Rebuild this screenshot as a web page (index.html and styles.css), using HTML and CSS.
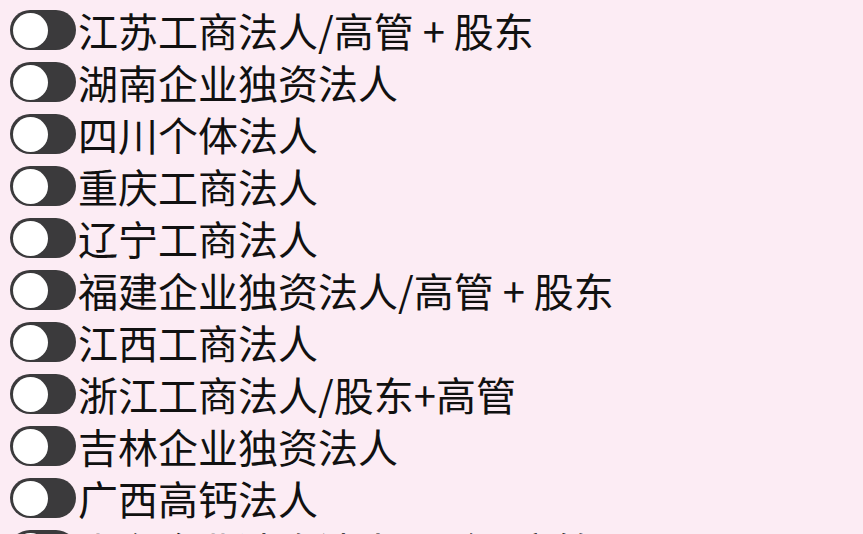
FILE: index.html
```html
<!DOCTYPE html>
<html lang="zh-CN">
<head>
<meta charset="utf-8">
<title>列表</title>
<link rel="stylesheet" href="styles.css">
</head>
<body>
<ul class="list">
  <li class="row"><span class="toggle"><span class="knob"></span></span><span class="label">江苏工商法人/高管 + 股东</span></li>
  <li class="row"><span class="toggle"><span class="knob"></span></span><span class="label">湖南企业独资法人</span></li>
  <li class="row"><span class="toggle"><span class="knob"></span></span><span class="label">四川个体法人</span></li>
  <li class="row"><span class="toggle"><span class="knob"></span></span><span class="label">重庆工商法人</span></li>
  <li class="row"><span class="toggle"><span class="knob"></span></span><span class="label">辽宁工商法人</span></li>
  <li class="row"><span class="toggle"><span class="knob"></span></span><span class="label">福建企业独资法人/高管 + 股东</span></li>
  <li class="row"><span class="toggle"><span class="knob"></span></span><span class="label">江西工商法人</span></li>
  <li class="row"><span class="toggle"><span class="knob"></span></span><span class="label">浙江工商法人/股东+高管</span></li>
  <li class="row"><span class="toggle"><span class="knob"></span></span><span class="label">吉林企业独资法人</span></li>
  <li class="row"><span class="toggle"><span class="knob"></span></span><span class="label">广西高钙法人</span></li>
  <li class="row"><span class="toggle"><span class="knob"></span></span><span class="label">山东企业独资法人/股东+高管</span></li>
</ul>
</body>
</html>
```
FILE: styles.css
```css
html, body {
  margin: 0;
  padding: 0;
  background: #fcecf4;
  overflow: hidden;
}
.list {
  list-style: none;
  margin: 0;
  padding: 4px 0 0 10px;
  display: flex;
  flex-direction: column;
}
.row {
  display: flex;
  align-items: center;
  gap: 2px;
  height: 52px;
}
.toggle {
  flex: none;
  width: 66px;
  height: 40px;
  box-sizing: border-box;
  padding: 2.5px;
  border-radius: 20px;
  background: #3b3a3c;
  display: flex;
  align-items: center;
}
.knob {
  width: 35px;
  height: 35px;
  border-radius: 50%;
  background: #ffffff;
}
.label {
  font-family: "Noto Sans CJK SC", "Noto Sans", sans-serif;
  font-size: 40px;
  line-height: 52px;
  color: #111111;
  white-space: nowrap;
}
```
